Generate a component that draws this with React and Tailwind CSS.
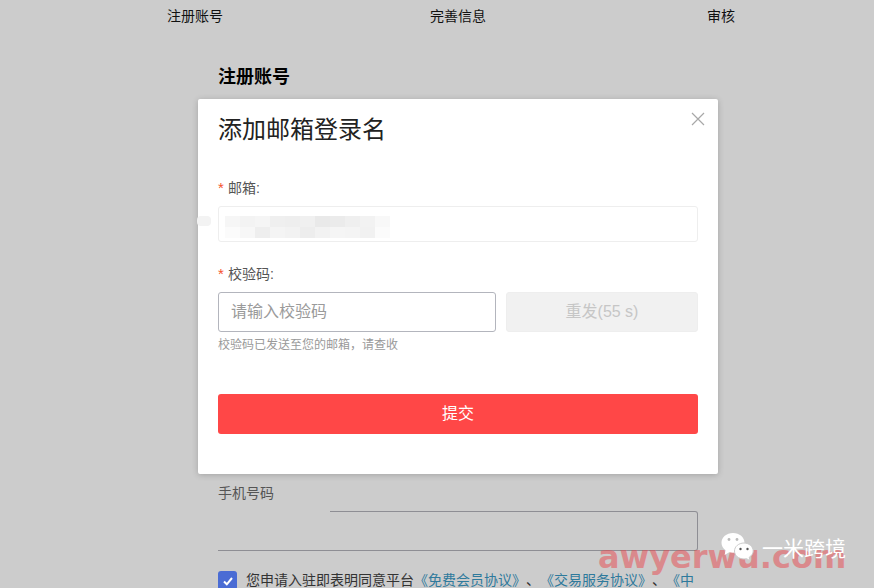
const CJK = 'font-["Liberation_Sans","Noto_Sans_CJK_SC",sans-serif]';

const MOSAIC = [
  ['#f6f6f6', '#f3f3f3', '#f5f5f5', '#efefef', '#eeeeee', '#f0f0f0', '#e9e9e9', '#ebebeb', '#efefef', '#f2f2f2', '#f8f8f8'],
  ['#fbfbfb', '#f7f7f7', '#eeeeee', '#f4f4f4', '#f2f2f2', '#ededed', '#f2f2f2', '#f5f5f5', '#f4f4f4', '#f1f1f1', '#fbfbfb'],
];

function Required({ children }) {
  return (
    <div className="flex items-center text-sm leading-5 text-[#555]">
      <span className="mr-[5px] w-[5px] text-[15px] text-[#f5522d]">*</span>
      {children}
    </div>
  );
}

function AddEmailModal() {
  return (
    <div className="absolute left-[198px] top-[99px] h-[375px] w-[520px] rounded-[2px] bg-white px-5 shadow-[0_1px_6px_rgba(0,0,0,0.2)]">
      <svg className="absolute right-[13px] top-[13px]" width="14" height="14" viewBox="0 0 14 14" fill="none" stroke="#a8a8a8" strokeWidth="1.2">
        <path d="M1 1l12 12M13 1L1 13" />
      </svg>
      <h2 className="pt-[15px] text-2xl leading-8 text-[#222]">添加邮箱登录名</h2>

      <div className="mt-8">
        <Required>邮箱:</Required>
      </div>
      <div className="relative mt-2 h-9 rounded-[3px] border border-[#eeeeee] bg-white">
        {/* blurred out address */}
        <div className="absolute left-[-22px] top-[9px] h-[10px] w-[14px] rounded-[4px] bg-[#f3f3f3]" />
        <div className="absolute left-[6px] top-[9px] flex flex-col">
          {MOSAIC.map((row, i) => (
            <div key={i} className="flex">
              {row.map((color, j) => (
                <div key={j} className="h-[11px] w-[15px]" style={{ backgroundColor: color }} />
              ))}
            </div>
          ))}
        </div>
      </div>

      <div className="mt-[22px]">
        <Required>校验码:</Required>
      </div>
      <div className="mt-2 flex gap-[10px]">
        <div className="flex h-10 w-[278px] items-center rounded-[3px] border border-[#b3b5bd] px-3 text-base text-[#9a9a9a]">请输入校验码</div>
        <button type="button" className="h-10 flex-1 rounded-[3px] border border-[#eeeeee] bg-[#f1f1f1] text-base text-[#c6c6c6]">重发(55 s)</button>
      </div>
      <p className="mt-[3px] text-xs leading-5 text-[#999]">校验码已发送至您的邮箱，请查收</p>

      <button type="button" className="mt-[39px] h-10 w-full rounded-[3px] bg-[#ff4747] text-base text-white">提交</button>
    </div>
  );
}

function Watermark() {
  return (
    <div className="pointer-events-none absolute bottom-0 left-0 right-0 top-0 overflow-hidden">
      <div className='absolute left-[598px] top-[533px] font-["DejaVu_Sans",sans-serif] text-[32px] font-bold leading-[48px] text-[#e8484d] opacity-50'>awyerwu.com</div>
      <svg className="absolute left-[720px] top-[532px]" width="36" height="32" viewBox="0 0 36 32">
        <path d="M13 1C6.5 1 1.5 5.4 1.5 10.8c0 3 1.6 5.7 4.1 7.5L4.6 23l4.6-2.8c1.2.3 2.5.5 3.800.5 6.500 0 11.500-4.400 11.500-9.900S19.500 1 13 1z" fill="#fff" />
        <path d="M24 11c-5.300 0-9.500 3.600-9.500 8s4.200 8 9.500 8c.9 0 1.800-.1 2.600-.3l3.400 2-.8-3.400c2.300-1.500 4-3.700 4-6.300 0-4.400-4.200-8-9.200-8z" fill="#fff" stroke="#cccccc" strokeWidth="1" />
        <circle cx="9" cy="7.500" r="1.400" fill="#bbb" />
        <circle cx="17" cy="7.500" r="1.400" fill="#bbb" />
        <circle cx="20.500" cy="17" r="1.200" fill="#555" />
        <circle cx="27.500" cy="17" r="1.200" fill="#555" />
      </svg>
      <div className="absolute left-[762px] top-[535px] text-[21px] leading-7 text-white">一米跨境</div>
    </div>
  );
}

export default function App() {
  return (
    <div className={`relative h-[588px] w-[874px] overflow-hidden bg-[#cccccc] ${CJK}`}>
      <div className="flex h-8 items-center pl-[167px] text-sm text-[#111]">
        <span>注册账号</span>
        <span className="ml-[207px]">完善信息</span>
        <span className="ml-[221px]">审核</span>
      </div>
      <div className="px-[218px] pt-[31px]">
        <h1 className="text-lg font-bold leading-7 text-black">注册账号</h1>
        <div className="mt-[392px] text-sm leading-5 text-[#555]">手机号码</div>
        <div className="relative mt-2 h-10 w-[480px] rounded-r-[3px] border-b border-r border-t border-[#8e8e94]">
          <div className="absolute -top-px left-0 h-px w-28 bg-[#cccccc]" />
        </div>
        <div className="mt-5 flex w-[480px] items-start">
          <div className="flex h-[19px] w-[19px] shrink-0 items-center justify-center rounded-[3px] bg-[#4a6cd4]">
            <svg width="12" height="12" viewBox="0 0 12 12" fill="none" stroke="#fff" strokeWidth="2">
              <path d="M2 6.500l2.800 2.800L10 3" />
            </svg>
          </div>
          <p className="ml-[9px] whitespace-nowrap text-sm leading-[19px] text-[#333] [text-spacing-trim:space-all]">
            您申请入驻即表明同意平台<span className="text-[#2f7a9c]">《免费会员协议》</span>、<span className="text-[#2f7a9c]">《交易服务协议》</span>、<span className="text-[#2f7a9c]">《中</span>
          </p>
        </div>
      </div>
      <AddEmailModal />
      <Watermark />
    </div>
  );
}
